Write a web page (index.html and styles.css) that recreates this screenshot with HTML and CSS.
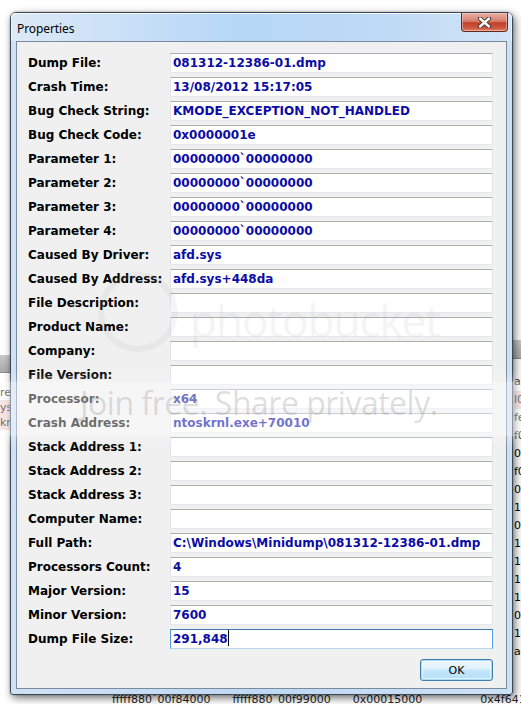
FILE: index.html
```html
<!DOCTYPE html>
<html>
<head>
<meta charset="utf-8">
<link rel="stylesheet" href="styles.css">
</head>
<body>
<div class="desktop">
  <div class="bg-app">
    <div class="bg-left">
      <div class="bg-header"></div>
      <div class="bg-row">re</div>
      <div class="bg-row pink">ys:</div>
      <div class="bg-row pink">kr</div>
    </div>
    <div class="bg-right">
      <div class="bg-header"></div>
      <div class="bg-row">ar</div>
      <div class="bg-row pink">l0</div>
      <div class="bg-row">fe</div>
      <div class="bg-row">f0</div>
      <div class="bg-row">0</div>
      <div class="bg-row">f0</div>
      <div class="bg-row">0:</div>
      <div class="bg-row">1:</div>
      <div class="bg-row">0:</div>
      <div class="bg-row">15</div>
      <div class="bg-row">1:</div>
      <div class="bg-row">1(</div>
      <div class="bg-row">1:</div>
      <div class="bg-row">0</div>
      <div class="bg-row">1:</div>
      <div class="bg-row">ac</div>
    </div>
    <div class="bg-bottom">
      <span>fffff880`00f84000</span>
      <span>fffff880`00f99000</span>
      <span>0x00015000</span>
      <span>0x4f641d4</span>
    </div>
  </div>

  <div class="window">
    <div class="titlebar">
      <span class="title">Properties</span>
      <div class="close">
        <svg width="17" height="11" viewBox="0 0 17 11">
          <path d="M4 1.5 L13 9.5 M13 1.5 L4 9.5" stroke="#3a2a28" stroke-width="4.2" stroke-linecap="round"/>
          <path d="M4 1.5 L13 9.5 M13 1.5 L4 9.5" stroke="#ffffff" stroke-width="2.4" stroke-linecap="round"/>
        </svg>
      </div>
    </div>
    <div class="client">
      <div class="form">
        <div class="label">Dump File:</div><div class="field">081312-12386-01.dmp</div>
        <div class="label">Crash Time:</div><div class="field">13/08/2012 15:17:05</div>
        <div class="label">Bug Check String:</div><div class="field">KMODE_EXCEPTION_NOT_HANDLED</div>
        <div class="label">Bug Check Code:</div><div class="field">0x0000001e</div>
        <div class="label">Parameter 1:</div><div class="field">00000000`00000000</div>
        <div class="label">Parameter 2:</div><div class="field">00000000`00000000</div>
        <div class="label">Parameter 3:</div><div class="field">00000000`00000000</div>
        <div class="label">Parameter 4:</div><div class="field">00000000`00000000</div>
        <div class="label">Caused By Driver:</div><div class="field">afd.sys</div>
        <div class="label">Caused By Address:</div><div class="field">afd.sys+448da</div>
        <div class="label">File Description:</div><div class="field"></div>
        <div class="label">Product Name:</div><div class="field"></div>
        <div class="label">Company:</div><div class="field"></div>
        <div class="label">File Version:</div><div class="field"></div>
        <div class="label">Processor:</div><div class="field">x64</div>
        <div class="label">Crash Address:</div><div class="field">ntoskrnl.exe+70010</div>
        <div class="label">Stack Address 1:</div><div class="field"></div>
        <div class="label">Stack Address 2:</div><div class="field"></div>
        <div class="label">Stack Address 3:</div><div class="field"></div>
        <div class="label">Computer Name:</div><div class="field"></div>
        <div class="label">Full Path:</div><div class="field">C:\Windows\Minidump\081312-12386-01.dmp</div>
        <div class="label">Processors Count:</div><div class="field">4</div>
        <div class="label">Major Version:</div><div class="field">15</div>
        <div class="label">Minor Version:</div><div class="field">7600</div>
        <div class="label">Dump File Size:</div><div class="field focused">291,848<span class="caret"></span></div>
      </div>
      <div class="buttons">
        <button class="ok">OK</button>
      </div>
    </div>
  </div>

  <div class="watermark">
    <div class="wm-logo"></div>
    <div class="wm-name">photobucket</div>
    <div class="wm-band"></div>
    <div class="wm-tag">Join free. Share privately.</div>
  </div>
</div>
</body>
</html>
```
FILE: styles.css
```css
html, body {
  margin: 0;
  padding: 0;
  background: #ffffff;
}
.desktop {
  position: relative;
  width: 521px;
  height: 704px;
  overflow: hidden;
  background: #ffffff;
  font-family: "DejaVu Sans", Verdana, sans-serif;
}

/* background application */
.bg-app {
  position: absolute;
  inset: 0;
  font-family: "DejaVu Sans", sans-serif;
  font-size: 11px;
  color: #000;
}
.bg-left {
  position: absolute;
  left: 0;
  top: 355px;
  width: 12px;
}
.bg-right {
  position: absolute;
  left: 508px;
  top: 340px;
  width: 20px;
  padding-left: 6px;
}
.bg-header {
  height: 17px;
  background: linear-gradient(#c9c9c9, #a9a9a9);
  border-bottom: 1px solid #888;
  margin-bottom: 12px;
}
.bg-right .bg-header {
  height: 18px;
  margin-bottom: 14px;
  margin-left: -6px;
}
.bg-row {
  height: 18px;
  line-height: 18px;
  white-space: nowrap;
}
.bg-left .bg-row { height: 15px; line-height: 15px; }
.bg-row.pink { background: #f1d3d3; }
.bg-bottom {
  position: absolute;
  left: 0;
  top: 693px;
  display: flex;
  font-size: 11px;
  color: #222;
}
.bg-bottom span { position: relative; }
.bg-bottom span:nth-child(1) { margin-left: 112px; }
.bg-bottom span:nth-child(2) { margin-left: 22px; }
.bg-bottom span:nth-child(3) { margin-left: 22px; }
.bg-bottom span:nth-child(4) { margin-left: 58px; }

/* window */
.window {
  position: absolute;
  left: 10px;
  top: 12px;
  width: 501px;
  height: 681px;
  border: 1px solid #3c4856;
  border-radius: 6px 6px 3px 3px;
  background: linear-gradient(to right, #cfe1f4, #bfd9f4 50%, #cde1f5);
  box-shadow: 2px 3px 8px rgba(0,0,0,0.55), 0 0 2px rgba(0,0,0,0.3);
  display: flex;
  flex-direction: column;
}
.titlebar {
  height: 28px;
  position: relative;
  display: flex;
  align-items: center;
  padding-left: 6px;
  border-radius: 5px 5px 0 0;
  background: linear-gradient(to right, #dce9f6, #b7d7f7 45%, #bcd9f6 70%, #d2e4f6);
  box-shadow: inset 0 1px 0 #f4f9ff, inset 1px 0 0 #eef5fd, inset -1px 0 0 #eef5fd;
}
.title {
  font-family: "Noto Sans", "Open Sans", sans-serif;
  font-size: 12px;
  color: #000;
  margin-top: 3px;
  letter-spacing: -0.1px;
}
.close {
  position: absolute;
  right: 4px;
  top: 0;
  width: 45px;
  height: 18px;
  border: 1px solid #5e2a22;
  border-top: none;
  border-radius: 0 0 4px 4px;
  background: linear-gradient(#eab1a4 0%, #d8806f 45%, #c0402b 55%, #cf5a42 85%, #e38a70 100%);
  box-shadow: inset 0 0 0 1px rgba(255,200,190,0.55);
  display: flex;
  align-items: center;
  justify-content: center;
}
.close svg { display: block; }

.client {
  flex: 1;
  margin: 0 5px 5px 5px;
  border: 1px solid #7a8ba0;
  background: #f0f0f0;
  padding: 11px 0 0 11px;
}
.form {
  display: grid;
  grid-template-columns: 142px 323px;
  grid-auto-rows: 20px;
  row-gap: 4px;
}
.label {
  font-weight: bold;
  font-size: 12px;
  color: #000;
  line-height: 20px;
  white-space: nowrap;
}
.field {
  box-sizing: border-box;
  height: 20px;
  background: #ffffff;
  border: 1px solid #e2e3ea;
  border-top-color: #abadb3;
  border-bottom-color: #e3e9ef;
  font-weight: bold;
  font-size: 12px;
  color: #0b0ba6;
  line-height: 18px;
  padding-left: 2px;
  white-space: nowrap;
  overflow: hidden;
}
.field.focused {
  border-color: #569de5;
  border-top-color: #3d7bad;
  border-bottom-color: #b7d9ed;
}
.caret {
  display: inline-block;
  width: 1px;
  height: 16px;
  background: #000;
  vertical-align: -3px;
}
.buttons {
  width: 465px;
  display: flex;
  justify-content: flex-end;
  margin-top: 10px;
}
.ok {
  width: 73px;
  height: 22px;
  margin-right: 0;
  border: 1px solid #3c7fb1;
  border-radius: 3px;
  background: linear-gradient(#ecf7fd 0%, #dff2fc 45%, #c4e7fc 50%, #b4dff8 100%);
  box-shadow: inset 0 0 0 1px #a8dcf6, inset 0 0 0 2px rgba(255,255,255,0.6);
  font-family: "DejaVu Sans", sans-serif;
  font-size: 11px;
  color: #000;
  padding: 0;
}

/* watermark */
.watermark {
  position: absolute;
  inset: 0;
  pointer-events: none;
}
.wm-band {
  position: absolute;
  left: 0;
  top: 382px;
  width: 521px;
  height: 54px;
  background: rgba(255,255,255,0.42);
  box-shadow: 0 0 10px 4px rgba(255,255,255,0.3);
}
.wm-tag {
  position: absolute;
  left: 80px;
  top: 381px;
  font-family: "Open Sans", "Lato", sans-serif;
  font-size: 32px;
  letter-spacing: -0.5px;
  color: rgba(140,140,140,0.28);
  white-space: nowrap;
}
.wm-logo {
  position: absolute;
  left: 98px;
  top: 272px;
  width: 80px;
  height: 80px;
  border-radius: 50%;
  border: 6px solid rgba(170,170,170,0.12);
  box-sizing: border-box;
}
.wm-name {
  position: absolute;
  left: 190px;
  top: 290px;
  font-family: "Open Sans", sans-serif;
  font-size: 44px;
  letter-spacing: -1px;
  color: rgba(170,170,170,0.14);
  white-space: nowrap;
}
```
